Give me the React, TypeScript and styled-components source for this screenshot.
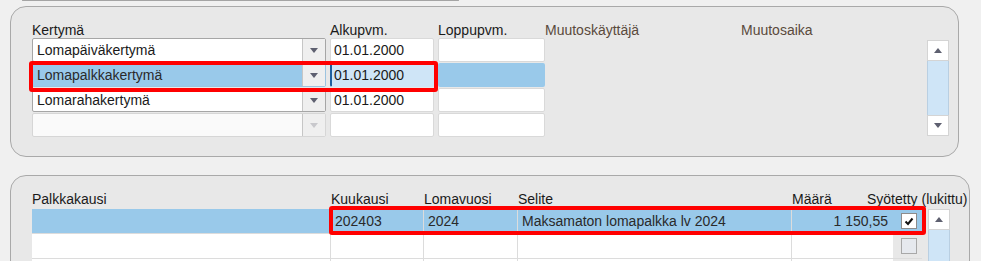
import styled, { createGlobalStyle } from 'styled-components';

type RowState = 'normal' | 'selected' | 'disabled';

interface AccrualRow {
  name: string;
  start: string;
  end: string;
  state: RowState;
}

interface PayRow {
  period: string;
  month: string;
  year: string;
  text: string;
  amount: string;
  checked: boolean;
  selected: boolean;
}

const accrualRows: AccrualRow[] = [
  { name: 'Lomapäiväkertymä', start: '01.01.2000', end: '', state: 'normal' },
  { name: 'Lomapalkkakertymä', start: '01.01.2000', end: '', state: 'selected' },
  { name: 'Lomarahakertymä', start: '01.01.2000', end: '', state: 'normal' },
  { name: '', start: '', end: '', state: 'disabled' },
];

const payRows: PayRow[] = [
  {
    period: '',
    month: '202403',
    year: '2024',
    text: 'Maksamaton lomapalkka lv 2024',
    amount: '1 150,55',
    checked: true,
    selected: true,
  },
  { period: '', month: '', year: '', text: '', amount: '', checked: false, selected: false },
  { period: '', month: '', year: '', text: '', amount: '', checked: false, selected: false },
];

const App = () => {
  return (
    <Page>
      <GlobalStyle />
      <PrevPanelEdge />

      <Panel $width={949} $height={151} $top={5} $padRight={9}>
        <AccrualGrid>
          <HeadLabel>Kertymä</HeadLabel>
          <HeadLabel>Alkupvm.</HeadLabel>
          <HeadLabel>Loppupvm.</HeadLabel>
          <HeadLabel $muted>Muutoskäyttäjä</HeadLabel>
          <HeadLabel $muted>Muutosaika</HeadLabel>

          {accrualRows.map((row, i) => (
            <AccrualRowParts key={i} row={row} />
          ))}
        </AccrualGrid>

        <ScrollBar $height={96}>
          <ScrollButton>
            <Arrow $up />
          </ScrollButton>
          <ScrollTrack />
          <ScrollButton>
            <Arrow />
          </ScrollButton>
        </ScrollBar>

        <Annotation $left={18} $top={54} $width={409} $height={31} />
      </Panel>

      <Panel $width={960} $height={120} $top={18} $padRight={19}>
        <PayGrid>
          <HeadLabel>Palkkakausi</HeadLabel>
          <HeadLabel>Kuukausi</HeadLabel>
          <HeadLabel>Lomavuosi</HeadLabel>
          <HeadLabel>Selite</HeadLabel>
          <HeadLabel>Määrä</HeadLabel>
          <HeadLabel $shift={-27}>Syötetty (lukittu)</HeadLabel>

          {payRows.map((row, i) => (
            <PayRowParts key={i} row={row} />
          ))}
        </PayGrid>

        <ScrollBar $height={60}>
          <ScrollButton>
            <Arrow $up />
          </ScrollButton>
          <ScrollTrack />
        </ScrollBar>

        <Annotation $left={318} $top={30} $width={597} $height={29} />
      </Panel>
    </Page>
  );
};

const AccrualRowParts = ({ row }: { row: AccrualRow }) => {
  const selected = row.state === 'selected';
  return (
    <>
      <Combo $state={row.state}>
        <ComboText>{row.name}</ComboText>
        <ComboButton>
          <Arrow $disabled={row.state === 'disabled'} />
        </ComboButton>
      </Combo>
      <DateCell $width={104} $selected={selected} $focused={selected}>
        {row.start}
      </DateCell>
      <DateCell $width={107} $selected={selected}>
        {row.end}
      </DateCell>
    </>
  );
};

const PayRowParts = ({ row }: { row: PayRow }) => {
  return (
    <>
      <PayCell $first $selected={row.selected}>
        {row.period}
      </PayCell>
      <PayCell $selected={row.selected}>{row.month}</PayCell>
      <PayCell $selected={row.selected}>{row.year}</PayCell>
      <PayCell $selected={row.selected}>{row.text}</PayCell>
      <PayCell $selected={row.selected} $right>
        {row.amount}
      </PayCell>
      <CheckCell $selected={row.selected}>
        <CheckBox $checked={row.checked}>
          {row.checked && (
            <svg width="10" height="9" viewBox="0 0 10 9">
              <path d="M1.5 4.5 L4 7 L8.5 1.5" fill="none" stroke="#111" strokeWidth="2" />
            </svg>
          )}
        </CheckBox>
      </CheckCell>
    </>
  );
};

export default App;

const GlobalStyle = createGlobalStyle`
  html, body {
    margin: 0;
    padding: 0;
    overflow: hidden;
    background: #f0f0f0;
  }

  body {
    font-family: "Liberation Sans", Arial, sans-serif;
    font-size: 14px;
    color: #1a1a1a;
  }
`;

const Page = styled.div`
  display: flex;
  flex-direction: column;
  align-items: flex-start;
  height: 261px;
`;

const PrevPanelEdge = styled.div`
  box-sizing: border-box;
  width: 437px;
  height: 2px;
  margin-left: 22px;
  border: 1px solid #a4a4a4;
  border-top: none;
  border-radius: 0 0 4px 4px;
  background: #e8e8e8;
`;

const Panel = styled.section<{ $width: number; $height: number; $top: number; $padRight: number }>`
  position: relative;
  flex-shrink: 0;
  box-sizing: border-box;
  display: flex;
  align-items: flex-start;
  width: ${(p) => p.$width}px;
  height: ${(p) => p.$height}px;
  margin: ${(p) => p.$top}px 0 0 10px;
  padding: 10px ${(p) => p.$padRight}px 0 21px;
  border: 1px solid #a9a9a9;
  border-radius: 16px;
  background: #e8e8e8;
`;

const AccrualGrid = styled.div`
  flex: 1;
  display: grid;
  grid-template-columns: 298px 108px 107px 196px 1fr;
  grid-template-rows: 20px repeat(4, 24px);
  row-gap: 1px;
`;

const PayGrid = styled.div`
  display: grid;
  grid-template-columns: 298px 92px 93px 273px 101px 28px;
  grid-template-rows: 22px repeat(3, 24px);
  column-gap: 1px;
  row-gap: 1px;
  margin-right: 6px;
  background: linear-gradient(#e8e8e8, #e8e8e8) top / 100% 23px no-repeat, #dcdcdc;
`;

const HeadLabel = styled.div<{ $muted?: boolean; $shift?: number }>`
  align-self: start;
  height: 20px;
  margin-left: ${(p) => p.$shift ?? 0}px;
  padding-top: 3px;
  white-space: nowrap;
  line-height: 20px;
  color: ${(p) => (p.$muted ? '#5a4a3c' : '#1a1a1a')};
`;

const comboBorder: Record<RowState, string> = {
  normal: '#a6a6a6',
  selected: '#9cc3df',
  disabled: '#d6d6d6',
};

const comboBg: Record<RowState, string> = {
  normal: '#ffffff',
  selected: '#99c9ea',
  disabled: '#fafafa',
};

const Combo = styled.div<{ $state: RowState }>`
  grid-column: 1;
  box-sizing: border-box;
  display: flex;
  width: 294px;
  height: 24px;
  border: 1px solid ${(p) => comboBorder[p.$state]};
  border-radius: 2px;
  background: ${(p) => comboBg[p.$state]};
  color: ${(p) => (p.$state === 'selected' ? '#2a2a2a' : '#1a1a1a')};
`;

const ComboText = styled.span`
  flex: 1;
  padding-left: 4px;
  line-height: 22px;
  white-space: nowrap;
`;

const ComboButton = styled.span`
  display: flex;
  align-items: center;
  justify-content: center;
  width: 22px;
  background: #efefef;
  border-left: 1px solid #c6c6c6;
`;

const Arrow = styled.span<{ $up?: boolean; $disabled?: boolean }>`
  width: 0;
  height: 0;
  border-left: 4px solid transparent;
  border-right: 4px solid transparent;
  ${(p) =>
    p.$up
      ? `border-bottom: 5px solid ${p.$disabled ? '#c8c8cc' : '#5e6070'};`
      : `border-top: 5px solid ${p.$disabled ? '#c8c8cc' : '#5e6070'};`}
`;

const DateCell = styled.div<{ $width: number; $selected?: boolean; $focused?: boolean }>`
  box-sizing: border-box;
  width: ${(p) => p.$width}px;
  height: 24px;
  padding-left: ${(p) => (p.$focused ? 2 : 3)}px;
  line-height: 22px;
  border: 1px solid ${(p) => (p.$selected ? 'transparent' : '#d9d9d9')};
  border-left: ${(p) => (p.$focused ? '2px solid #1d5f9f' : undefined)};
  border-radius: 2px;
  background: ${(p) => (p.$focused ? '#cfe5f7' : p.$selected ? '#99c9ea' : '#ffffff')};
`;

const PayCell = styled.div<{ $selected?: boolean; $right?: boolean; $first?: boolean }>`
  grid-column: ${(p) => (p.$first ? 1 : 'auto')};
  padding: 0 5px 0 4px;
  line-height: 24px;
  white-space: nowrap;
  text-align: ${(p) => (p.$right ? 'right' : 'left')};
  background: ${(p) => (p.$selected ? '#99c9ea' : '#ffffff')};
  color: ${(p) => (p.$selected ? '#2a2a2a' : '#1a1a1a')};
`;

const CheckCell = styled.div<{ $selected?: boolean }>`
  display: flex;
  align-items: center;
  padding-left: 8px;
  margin-left: -1px;
  background: ${(p) => (p.$selected ? '#99c9ea' : '#e8e8e8')};
`;

const CheckBox = styled.span<{ $checked: boolean }>`
  box-sizing: border-box;
  display: flex;
  align-items: center;
  justify-content: center;
  width: 16px;
  height: 16px;
  border: 1px solid ${(p) => (p.$checked ? '#8c8c8c' : '#a8a8a8')};
  background: ${(p) => (p.$checked ? '#ffffff' : '#e6e9ee')};
`;

const ScrollBar = styled.div<{ $height: number }>`
  display: flex;
  flex-direction: column;
  flex-shrink: 0;
  width: 22px;
  height: ${(p) => p.$height}px;
  margin-top: 23px;
`;

const ScrollButton = styled.div`
  box-sizing: border-box;
  display: flex;
  align-items: center;
  justify-content: center;
  height: 21px;
  border: 1px solid #d4d4d4;
  background: #ffffff;
`;

const ScrollTrack = styled.div`
  flex: 1;
  box-sizing: border-box;
  border: 1px solid #b9cfe2;
  border-top: none;
  border-bottom: none;
  background: #cfe5f7;
`;

const Annotation = styled.div<{ $left: number; $top: number; $width: number; $height: number }>`
  position: absolute;
  left: ${(p) => p.$left}px;
  top: ${(p) => p.$top}px;
  box-sizing: border-box;
  width: ${(p) => p.$width}px;
  height: ${(p) => p.$height}px;
  border: 4px solid #ff0000;
  border-radius: 3px;
  pointer-events: none;
`;
